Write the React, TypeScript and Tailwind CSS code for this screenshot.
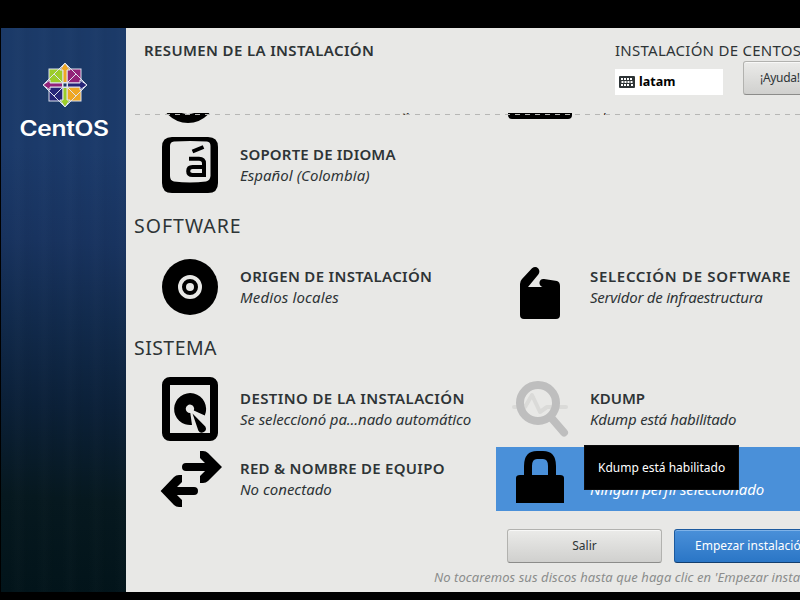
import React from "react";

const ClockIcon = () => (
  <svg className="block size-16 shrink-0" viewBox="0 0 64 64">
    <circle cx="30" cy="32" r="23.5" fill="none" stroke="#000" strokeWidth="9" />
  </svg>
);

const KeyboardIcon = () => (
  <svg className="block size-16 shrink-0" viewBox="0 0 64 64">
    <rect x="0" y="12" width="64" height="44" rx="4" />
  </svg>
);

const LanguageIcon = () => (
  <svg className="block size-16 shrink-0" viewBox="0 0 64 64">
    <path
      fillRule="evenodd"
      d="M14 4H50Q60 4 60 14V50Q60 60 50 60H14Q4 60 4 50V14Q4 4 14 4ZM16 8.6Q12 9 12 13V43Q12 47.500 16 48.500Q32 50.500 48 48.500Q52 47.500 52.500 43V13Q52.500 9 49 8.600Q32 7.600 16 8.600Z"
    />
    <path d="M34.500 18.500L45.500 14" fill="none" stroke="#000" strokeWidth="4" />
    <path d="M31 25.800H41Q46 25.800 46 30.500V42H34.500Q30.200 42 30.200 38.200Q30.200 34 34.500 34H46" fill="none" stroke="#000" strokeWidth="4" />
  </svg>
);

const DiscIcon = () => (
  <svg className="block size-16 shrink-0" viewBox="0 0 64 64">
    <circle cx="32" cy="32" r="28" />
    <circle cx="32" cy="32" r="10" fill="none" stroke="#e8e8e6" strokeWidth="4" />
    <circle cx="32" cy="32" r="4" fill="#e8e8e6" />
  </svg>
);

const PackageIcon = () => (
  <svg className="block size-16 shrink-0" viewBox="0 0 64 64">
    <path d="M12 29Q12 26 14 24L24 13.200Q27.500 10.800 30.300 13.500Q32.500 16.500 30.300 19.500L20 32H34.500Q31 30.500 31.500 27Q32.500 23.500 36 24L49 26Q52 27 52 31V60Q52 64 48 64H16Q12 64 12 60Z" />
  </svg>
);

const DiskIcon = () => (
  <svg className="block size-16 shrink-0" viewBox="0 0 64 64">
    <rect x="8" y="4" width="48" height="56" rx="4" fill="none" stroke="#000" strokeWidth="8" />
    <path d="M34 48A16 16 0 1 1 46.800 38.500L35.800 33.500A4.200 4.200 0 1 0 32.300 36Z" />
    <path d="M34.500 36.500L47.300 49.500A3.800 3.800 0 0 1 40.300 53.500Z" />
  </svg>
);

const NetworkIcon = () => (
  <svg className="block size-16 shrink-0" viewBox="0 0 64 64">
    <path d="M28 20H56M36 44H10" fill="none" stroke="#000" strokeWidth="8" strokeLinecap="round" />
    <path d="M42 4H45Q48 4 50 6L64 20L50 34Q48 36 45 36H42V29L51 20L42 11Z" />
    <path d="M24 28H21Q18 28 16 30L2.600 44L16 58Q18 60 21 60H24V53L15 44L24 35Z" />
  </svg>
);

const KdumpIcon = () => (
  <svg className="block size-16 shrink-0" viewBox="0 0 64 64">
    <path d="M6 30H17L24 18L32 35L39 30H58" fill="none" stroke="#dadad8" strokeWidth="4" strokeLinecap="round" strokeLinejoin="round" />
    <circle cx="30" cy="26" r="18" fill="none" stroke="#bebebe" strokeWidth="8" />
    <path d="M43.500 41L56 55.500" stroke="#bebebe" strokeWidth="8" strokeLinecap="round" />
  </svg>
);

const LockIcon = () => (
  <svg className="block size-16 shrink-0" viewBox="0 0 64 64">
    <path d="M12 28H52Q56 28 56 31V56H8V31Q8 28 12 28Z" />
    <path d="M20 30V19Q20 8 29 8H35Q44 8 44 19V30" fill="none" stroke="#000" strokeWidth="8" />
  </svg>
);

const TinyKeyboard = () => (
  <svg className="block h-3 w-4 shrink-0" viewBox="0 0 16 12">
    <rect width="16" height="12" rx="1" fill="#2e3436" />
    <path d="M2 3H14M2 9H4M12 9H14" stroke="#fff" strokeWidth="2" strokeDasharray="2 1" />
    <path d="M5 9H11M2.500 6H14" stroke="#fff" strokeWidth="2" strokeDasharray="2 1" />
  </svg>
);

const Logo = () => (
  <svg className="block h-[46px] w-[46px]" viewBox="0 0 46 46" stroke="#dfe3ee" strokeWidth="1">
    <rect x="7" y="7" width="32" height="32" fill="#1a3763" stroke="none" />
    <rect x="7" y="7" width="14" height="14" fill="#9ccd2a" />
    <rect x="25" y="7" width="14" height="14" fill="#932279" />
    <rect x="7" y="25" width="14" height="14" fill="#262577" />
    <rect x="25" y="25" width="14" height="14" fill="#efa724" />
    <path d="M23 1L34 12L23 23L12 12ZM23 23L34 34L23 45L12 34Z" fill="none" />
    <path d="M12 12L23 23L12 34L1 23ZM34 12L45 23L34 34L23 23Z" fill="none" />
    <path d="M23 1L28 8H25V20.500H21V8H18Z" fill="#efa724" />
    <path d="M45 23L38 28V25H25.500V21H38V18Z" fill="#262577" />
    <path d="M23 45L18 38H21V25.500H25V38H28Z" fill="#9ccd2a" />
    <path d="M1 23L8 18V21H20.500V25H8V28Z" fill="#932279" />
    <rect x="21" y="21" width="4" height="4" fill="#1a3763" />
  </svg>
);

type SpokeProps = {
  icon: React.ReactNode;
  title: string;
  status: string;
  titleClass?: string;
  statusClass?: string;
  selected?: boolean;
};

const Spoke = ({ icon, title, status, titleClass = "", statusClass = "", selected = false }: SpokeProps) => (
  <div className={`flex h-16 w-[350px] shrink-0 gap-[18px] pl-3 whitespace-nowrap ${selected ? "bg-[#4a90d9] text-white" : ""}`}>
    {icon}
    <div className="pt-[11px]">
      <div className={`h-[20px] text-[15px] leading-[21px] font-semibold ${titleClass}`}>{title}</div>
      <div className={`h-[22px] text-[15px] leading-[22px] italic ${statusClass}`}>{status}</div>
    </div>
  </div>
);

const Row = ({ children }: { children: React.ReactNode }) => (
  <div className="flex pl-[20px]">{children}</div>
);

const Heading = ({ children, className }: { children: string; className: string }) => (
  <h2 className={`flex h-[58px] items-center pl-2 text-[19.5px] leading-none ${className}`}>{children}</h2>
);

export default function App() {
  return (
    <div className="h-[600px] w-[800px] overflow-hidden bg-black pt-[28px] pb-2 pl-px font-['Noto_Sans',sans-serif] text-[#2e3436]">
      <div className="flex h-[564px]">
        <aside className="flex w-[125px] shrink-0 flex-col items-center bg-[repeating-linear-gradient(90deg,rgba(0,0,0,0.02)_0px,rgba(0,0,0,0)_9px,rgba(255,255,255,0.01)_17px,rgba(0,0,0,0.02)_26px),linear-gradient(184deg,#1b3a68_0%,#1b3a6a_22%,#18335f_38%,#112a4c_52%,#0b2038_67%,#06181f_83%,#02141a_100%)] pt-[34px]">
          <div className="pl-[3px]"><Logo /></div>
          <div className="mt-[9px] ml-[2px] flex h-6 items-center text-white">
            <span className="block scale-x-[1.17] font-['Inter',sans-serif] text-[21px] leading-6 font-semibold tracking-[-0.3px]">CentOS</span>
          </div>
        </aside>

        <main className="flex w-[674px] flex-col overflow-hidden bg-[#e8e8e6]">
          <header className="flex h-[85px] shrink-0 justify-between whitespace-nowrap">
            <h1 className="pt-[12px] pl-[18px] text-[15px] leading-[21px] font-semibold tracking-[0.37px]">RESUMEN DE LA INSTALACIÓN</h1>
            <div className="w-[185px] pt-[12px]">
              <div className="text-[15px] leading-[21px] tracking-[0.26px]">INSTALACIÓN DE CENTOS 7</div>
              <div className="flex">
                <div className="mt-[8px] flex h-[26px] w-[108px] shrink-0 items-center gap-1 bg-white pl-1 text-[12.5px] font-bold text-black">
                  <TinyKeyboard />
                  latam
                </div>
                <button className="ml-5 h-[34px] w-[76px] shrink-0 rounded-[3px] border border-[#b2b2af] border-b-[#8c8c8a] bg-linear-to-b from-[#ebebe9] to-[#d0d0ce] pl-4 text-left text-[12px] tracking-[-0.3px] shadow-[inset_0_1px_#f8f8f7]">
                  ¡Ayuda!
                </button>
              </div>
            </div>
          </header>

          <div className="relative h-[402px] shrink-0 overflow-hidden">
            <div className="-mt-[50px]">
              <Row>
                <Spoke icon={<ClockIcon />} title="FECHA Y HORA" status="Huso horario América/Bogotá" statusClass="tracking-[-0.24px]" />
                <Spoke icon={<KeyboardIcon />} title="TECLADO" status="Español" />
              </Row>
              <div className="h-[6px]" />
              <Row>
                <Spoke icon={<LanguageIcon />} title="SOPORTE DE IDIOMA" titleClass="tracking-[0.18px]" status="Español (Colombia)" statusClass="tracking-[0.05px]" />
              </Row>
              <Heading className="tracking-[1px]">SOFTWARE</Heading>
              <Row>
                <Spoke icon={<DiscIcon />} title="ORIGEN DE INSTALACIÓN" titleClass="tracking-[0.33px]" status="Medios locales" statusClass="tracking-[0.14px]" />
                <Spoke icon={<PackageIcon />} title="SELECCIÓN DE SOFTWARE" titleClass="tracking-[0.68px]" status="Servidor de infraestructura" statusClass="tracking-[-0.23px]" />
              </Row>
              <Heading className="tracking-[0.45px]">SISTEMA</Heading>
              <Row>
                <Spoke icon={<DiskIcon />} title="DESTINO DE LA INSTALACIÓN" titleClass="tracking-[0.4px]" status="Se seleccionó pa...nado automático" statusClass="tracking-[-0.1px]" />
                <Spoke icon={<KdumpIcon />} title="KDUMP" status="Kdump está habilitado" statusClass="tracking-[-0.23px]" />
              </Row>
              <div className="h-[6px]" />
              <Row>
                <Spoke icon={<NetworkIcon />} title="RED & NOMBRE DE EQUIPO" titleClass="tracking-[0.28px]" status="No conectado" />
                <Spoke icon={<LockIcon />} title="SECURITY POLICY" status="Ningún perfil seleccionado" statusClass="tracking-[-0.12px]" selected />
              </Row>
            </div>
            <div className="absolute top-px right-0 left-[9px] h-px bg-[repeating-linear-gradient(90deg,#b7b7b5_0px,#b7b7b5_5px,transparent_5px,transparent_10px)]" />
            <div className="absolute top-[332px] left-[458px] flex h-[45px] w-[155px] items-center border border-[#0c0c0c] bg-black pl-[13px] text-[12px] whitespace-nowrap text-white">
              Kdump está habilitado
            </div>
          </div>

          <footer className="pt-[14px] whitespace-nowrap">
            <div className="flex gap-3 pl-[381px] text-[12px]">
              <button className="h-[34px] w-[155px] shrink-0 rounded-[3px] border border-[#b2b2af] border-b-[#8c8c8a] bg-linear-to-b from-[#ebebe9] to-[#d0d0ce] shadow-[inset_0_1px_#f8f8f7]">
                Salir
              </button>
              <button className="h-[34px] w-[155px] shrink-0 rounded-[3px] border border-[#1c5a9e] border-b-[#123e6e] bg-linear-to-b from-[#4a90d9] to-[#2a76c6] pl-5 text-left text-white shadow-[inset_0_1px_#7fb2e8]">
                Empezar instalación
              </button>
            </div>
            <p className="pt-[4px] pl-[308px] text-[13px] leading-[20px] tracking-[0.06px] text-[#8b8d8c] italic">
              No tocaremos sus discos hasta que haga clic en 'Empezar instalación'.
            </p>
          </footer>
        </main>
      </div>
    </div>
  );
}
